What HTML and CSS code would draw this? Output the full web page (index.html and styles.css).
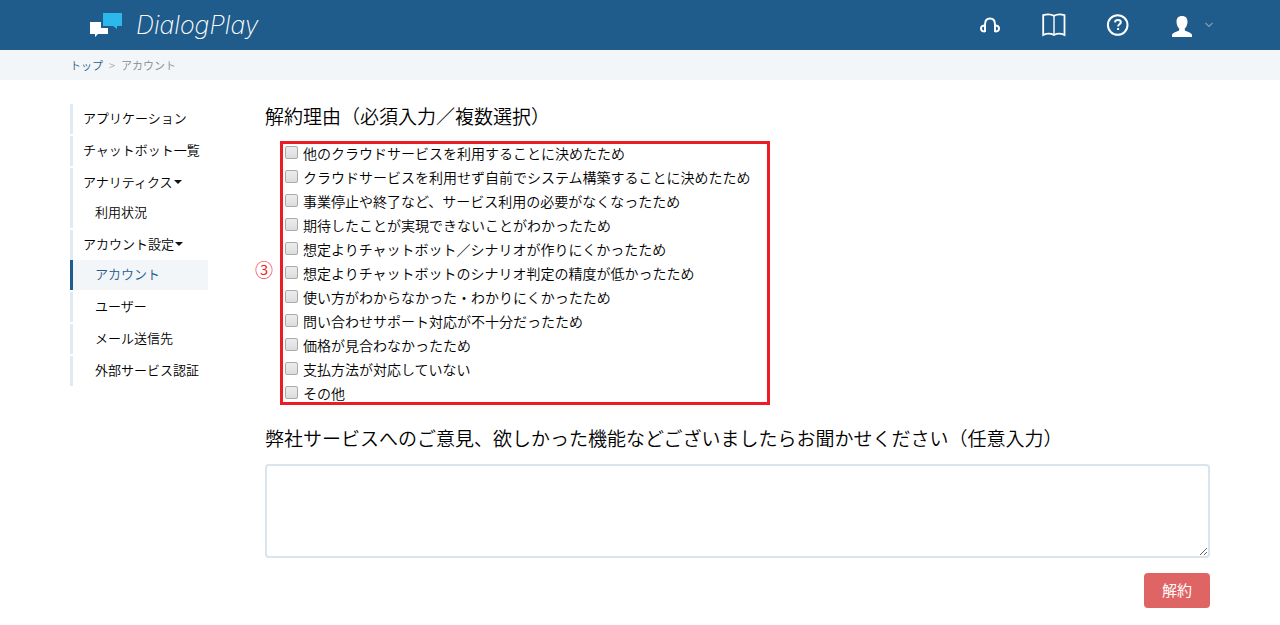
FILE: index.html
```html
<!DOCTYPE html>
<html lang="ja">
<head>
    <meta charset="UTF-8">
    <meta name="viewport" content="width=device-width, initial-scale=1.0">
    <title>アカウント - DialogPlay</title>
    <link rel="stylesheet" href="styles.css">
</head>
<body>
    <header class="header">
        <div class="container header-inner">
            <a href="#" class="logo">
                <svg class="logo-mark" width="34" height="26" viewBox="0 0 34 26">
                    <path fill="#2bb8ea" d="M13 1h19v13h-5v3l-4-3H13z"/>
                    <path fill="#fff" d="M0 10h11v6h7v6H8l-3 3v-3H0z"/>
                </svg>
                <span class="logo-text">DialogPlay</span>
            </a>
            <nav class="header-nav">
                <a href="#" class="header-link" aria-label="サポート">
                    <svg width="24" height="24" viewBox="0 0 24 24" fill="none" stroke="#fff" stroke-width="2">
                        <path d="M7 19V11.500C7 7.200 9 5.500 12 5.500s5 1.700 5 6V19"/>
                        <path d="M7 12.500C4.200 12.500 3 14 3 15.500s1 3 4 3M17 12.500c2.800 0 4 1.500 4 3s-1 3-4 3"/>
                    </svg>
                </a>
                <a href="#" class="header-link" aria-label="マニュアル">
                    <svg width="24" height="24" viewBox="0 0 24 24" fill="none" stroke="#fff" stroke-width="1.800">
                        <path d="M1.200 22V2.200C4.500 1.200 9 1.200 12 2.800c3-1.600 7.500-1.600 10.500-.6V22c-3.500-1.600-7.500-1.600-10.500 0-3-1.600-7.500-1.600-10.800 0z"/>
                        <path stroke-width="1.400" d="M12 3v19"/>
                    </svg>
                </a>
                <a href="#" class="header-link" aria-label="ヘルプ">
                    <svg width="24" height="24" viewBox="0 0 24 24" fill="none" stroke="#fff" stroke-width="2">
                        <circle cx="11.700" cy="12" r="9.800"/>
                        <path d="M9 9.300C9.200 7.700 10.300 7 11.900 7c1.700 0 2.900.9 2.900 2.300 0 2-2.700 2.100-2.700 4.300"/>
                        <path d="M11.100 16h2"/>
                    </svg>
                </a>
                <button type="button" class="user-menu" aria-label="ユーザーメニュー">
                    <svg width="24" height="24" viewBox="0 0 24 24" fill="#fff">
                        <path d="M12 3c3.600 0 5.500 2.200 5.500 5.500 0 2.900-1 5.500-2.700 7v1.700c.4 1.300 6.700 1.800 7.200 4.600V24H2v-2.200c.5-2.800 6.800-3.300 7.200-4.600v-1.700c-1.700-1.500-2.700-4.100-2.700-7C6.500 5.200 8.400 3 12 3z"/>
                    </svg>
                    <svg width="10" height="8" viewBox="0 0 10 8" fill="none" stroke="#7f9fb9" stroke-width="1.200">
                        <path d="M1.500 2 5 5.500 8.500 2"/>
                    </svg>
                </button>
            </nav>
        </div>
    </header>

    <nav class="breadcrumb">
        <div class="container breadcrumb-inner">
            <a href="#">トップ</a>
            <span class="separator">&gt;</span>
            <span class="current">アカウント</span>
        </div>
    </nav>

    <div class="container layout">
        <nav class="sidebar">
            <ul class="menu">
                <li class="menu-group"><a href="#">アプリケーション</a></li>
                <li class="menu-group"><a href="#">チャットボット一覧</a></li>
                <li class="menu-group">
                    <a href="#">アナリティクス<span class="caret"></span></a>
                    <a href="#" class="sub">利用状況</a>
                </li>
                <li class="menu-group"><a href="#">アカウント設定<span class="caret"></span></a></li>
                <li class="menu-group active"><a href="#" class="sub">アカウント</a></li>
                <li class="menu-group"><a href="#" class="sub">ユーザー</a></li>
                <li class="menu-group"><a href="#" class="sub">メール送信先</a></li>
                <li class="menu-group"><a href="#" class="sub">外部サービス認証</a></li>
            </ul>
        </nav>

        <main class="content">
            <form>
                <h2 class="title" id="reason-title">解約理由（必須入力／複数選択）</h2>
                <div class="reasons" role="group" aria-labelledby="reason-title">
                    <span class="step">③</span>
                    <label class="reason"><input type="checkbox" name="reason">他のクラウドサービスを利用することに決めたため</label>
                    <label class="reason"><input type="checkbox" name="reason">クラウドサービスを利用せず自前でシステム構築することに決めたため</label>
                    <label class="reason"><input type="checkbox" name="reason">事業停止や終了など、サービス利用の必要がなくなったため</label>
                    <label class="reason"><input type="checkbox" name="reason">期待したことが実現できないことがわかったため</label>
                    <label class="reason"><input type="checkbox" name="reason">想定よりチャットボット／シナリオが作りにくかったため</label>
                    <label class="reason"><input type="checkbox" name="reason">想定よりチャットボットのシナリオ判定の精度が低かったため</label>
                    <label class="reason"><input type="checkbox" name="reason">使い方がわからなかった・わかりにくかったため</label>
                    <label class="reason"><input type="checkbox" name="reason">問い合わせサポート対応が不十分だったため</label>
                    <label class="reason"><input type="checkbox" name="reason">価格が見合わなかったため</label>
                    <label class="reason"><input type="checkbox" name="reason">支払方法が対応していない</label>
                    <label class="reason"><input type="checkbox" name="reason">その他</label>
                </div>
                <h2 class="title"><label for="opinion">弊社サービスへのご意見、欲しかった機能などございましたらお聞かせください（任意入力）</label></h2>
                <textarea id="opinion" class="opinion" name="opinion"></textarea>
                <div class="actions">
                    <button type="submit" class="btn-danger">解約</button>
                </div>
            </form>
        </main>
    </div>
</body>
</html>
```

FILE: styles.css
```css
* {
    margin: 0;
    padding: 0;
    box-sizing: border-box;
}

body {
    font-family: "Noto Sans CJK JP", sans-serif;
    font-weight: 350;
    font-size: 14px;
    line-height: 22px;
    color: #000;
    background: #fff;
}

a {
    color: inherit;
    text-decoration: none;
}

.container {
    max-width: 1140px;
    margin: 0 auto;
}

/* Header */
.header {
    background: #1f5c8b;
}

.header-inner {
    height: 50px;
    padding-left: 20px;
    display: flex;
    align-items: center;
    justify-content: space-between;
}

.logo {
    display: flex;
    align-items: center;
    gap: 12px;
    color: #fff;
}

.logo-text {
    font-family: Inter, sans-serif;
    font-size: 25px;
    font-style: italic;
    font-weight: 200;
    line-height: 26px;
}

.header-nav {
    display: flex;
    align-items: center;
    gap: 40px;
    margin-right: -4px;
}

.header-link {
    display: flex;
}

.user-menu {
    display: flex;
    align-items: center;
    gap: 10px;
    border: none;
    background: none;
    cursor: pointer;
}

/* Breadcrumb */
.breadcrumb {
    background: #f2f6f9;
    font-size: 11px;
}

.breadcrumb-inner {
    display: flex;
    align-items: center;
    gap: 6px;
    height: 30px;
    color: #888;
}

.breadcrumb a {
    color: #1f5c8b;
}

.separator {
    color: #aaa;
}

/* Layout */
.layout {
    display: grid;
    grid-template-columns: 138px minmax(0, 1fr);
    gap: 57px;
    padding-top: 24px;
}

/* Sidebar */
.menu {
    list-style: none;
    font-size: 13px;
}

.menu-group {
    margin-bottom: 2px;
    border-left: 3px solid #e1eaf2;
}

.menu-group a {
    display: flex;
    align-items: center;
    height: 30px;
    padding-bottom: 2px;
    padding-left: 10px;
}

.menu-group .sub {
    padding-left: 22px;
}

.menu-group.active {
    margin-top: -2px;
    border-color: #1f5c8b;
    background: #f2f6f9;
    color: #1f5c8b;
}

.caret {
    margin-left: 1px;
    border: 4px solid transparent;
    border-top-color: #111;
    border-bottom: none;
}

/* Form */
.title {
    font-size: 19px;
    font-weight: inherit;
    line-height: 24px;
}

.reasons {
    position: relative;
    max-width: 490px;
    margin: 14px 0 20px 15px;
    padding-left: 5px;
}

.reasons::after {
    content: "";
    position: absolute;
    inset: -1px 0 1px;
    border: 3px solid #ed1c24;
    pointer-events: none;
}

.step {
    position: absolute;
    top: 116px;
    left: -25px;
    font-size: 18px;
    color: #ed1c24;
}

.reason {
    display: flex;
    align-items: flex-start;
    gap: 5px;
    height: 24px;
}

.reason input {
    appearance: none;
    flex: none;
    width: 13px;
    height: 13px;
    margin-top: 4px;
    border: 1px solid #aaa;
    border-radius: 2px;
    background: linear-gradient(#ededed, #dcdcdc);
}

.reason input:checked {
    background: #1f5c8b;
}

.opinion {
    display: block;
    width: 100%;
    height: 94px;
    margin-top: 14px;
    padding: 8px;
    border: 2px solid #dae4ec;
    border-radius: 4px;
    font: inherit;
}

.actions {
    display: flex;
    justify-content: flex-end;
    margin-top: 15px;
}

.btn-danger {
    width: 66px;
    height: 35px;
    padding-bottom: 2px;
    border: none;
    border-radius: 4px;
    background: #df6464;
    color: #fff;
    font-family: inherit;
    font-size: 15px;
    cursor: pointer;
}
```
